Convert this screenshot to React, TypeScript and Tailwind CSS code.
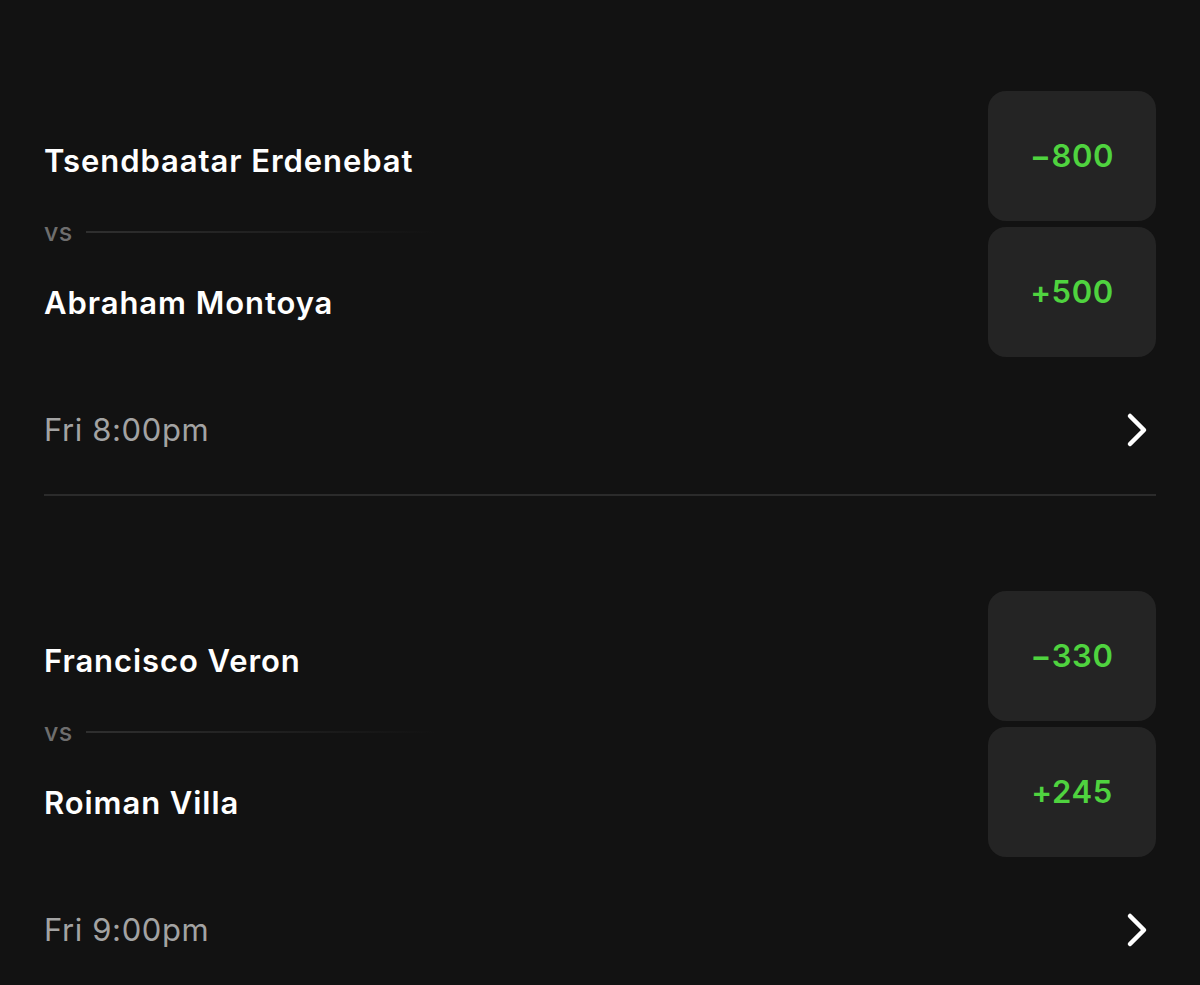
const fights = [
  { a: "Tsendbaatar Erdenebat", b: "Abraham Montoya", oa: "−800", ob: "+500", time: "Fri 8:00pm" },
  { a: "Francisco Veron", b: "Roiman Villa", oa: "−330", ob: "+245", time: "Fri 9:00pm" },
];

function Chevron() {
  return (
    <svg width="22" height="36" viewBox="0 0 22 36" fill="none" aria-hidden>
      <path d="M4 4l14 14L4 32" stroke="#ffffff" strokeWidth="4.5" strokeLinecap="round" strokeLinejoin="round" />
    </svg>
  );
}

function OddsButton({ value }: { value: string }) {
  return (
    <button
      type="button"
      className="w-[168px] h-[130px] rounded-[18px] bg-[#242424] flex items-center justify-center text-[31px] font-semibold text-[#4fd33f] tracking-[0.02em]"
    >
      {value}
    </button>
  );
}

export default function App() {
  return (
    <div
      className="min-h-screen bg-[#121212] px-[44px] pt-[91px] text-white"
      style={{ fontFamily: "Inter, 'Noto Sans', sans-serif" }}
    >
      {fights.map((f, i) => (
        <div key={i}>
          <div className="flex items-start justify-between">
            <div className="flex-1 pt-[52px]">
              <div className="text-[31px] leading-[36px] font-semibold tracking-[0.03em]">{f.a}</div>
              <div className="mt-[41px] h-[24px] flex items-center gap-[13px]">
                <span className="text-[25px] leading-[24px] font-medium text-[#6e6e6e] tracking-[0.02em]">vs</span>
                <div className="h-[2px] w-[350px] bg-gradient-to-r from-[#2f2f2f] to-transparent" />
              </div>
              <div className="mt-[41px] text-[31px] leading-[36px] font-semibold tracking-[0.03em]">{f.b}</div>
            </div>
            <div className="flex flex-col gap-[6px]">
              <OddsButton value={f.oa} />
              <OddsButton value={f.ob} />
            </div>
          </div>
          <div className="mt-[55px] h-[36px] flex items-center justify-between">
            <span className="text-[31px] leading-[36px] text-[#a3a3a3] tracking-[0.02em]">{f.time}</span>
            <div className="mr-[8px]">
              <Chevron />
            </div>
          </div>
          {i < fights.length - 1 && (
            <div className="mt-[46px] mb-[95px] h-[2px] bg-[#2b2b2b]" />
          )}
        </div>
      ))}
    </div>
  );
}
